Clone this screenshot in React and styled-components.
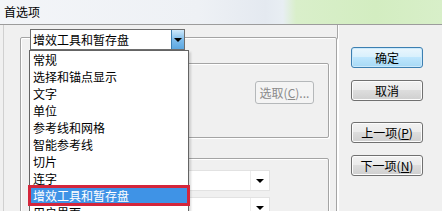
import React from 'react';
import styled, { createGlobalStyle } from 'styled-components';

const Global = createGlobalStyle`
  html, body { margin: 0; padding: 0; }
  body {
    font-family: "Noto Sans CJK SC", "Microsoft YaHei", sans-serif;
    font-size: 12px;
    color: #000;
    background: #f0f0f0;
  }
`;

const Window = styled.div`
  width: 442px;
  height: 211px;
  overflow: hidden;
  position: relative;
  display: flex;
  flex-direction: column;
  background: #f0f0f0;
`;

const TitleBar = styled.div`
  height: 24px;
  flex: none;
  display: flex;
  align-items: center;
  padding-left: 4px;
  box-sizing: border-box;
  background: linear-gradient(90deg, #f3f5f8 0%, #eef1f5 45%, #e4e9f0 60%, #e8eef3 64%, #d9efca 67%, #d3edc1 85%, #d8efc9 100%);
  font-size: 12px;
  line-height: 1;
`;

const Body = styled.div`
  flex: 1;
  display: flex;
  border-top: 1px solid #9c9c9c;
  background: #f0f0f0;
`;

const LeftFrame = styled.div`
  width: 333px;
  margin-left: 3px;
  border-left: 1px solid #d0d0d0;
  border-right: 1px solid #a8a8a8;
  box-shadow: 1px 0 0 #ffffff;
  position: relative;
`;

const GroupBox = styled.div`
  margin: ${p => p.$m};
  height: ${p => p.$h};
  border: 1px solid #a4a4a4;
  border-radius: 2px;
  box-shadow: inset 1px 1px 0 #ffffff, 1px 1px 0 #ffffff;
  box-sizing: border-box;
  display: flex;
  flex-direction: column;
`;

const Combo = styled.div`
  width: 155px;
  height: 21px;
  margin: -9px 0 0 9px;
  box-sizing: border-box;
  border: 1px solid #6e6e6e;
  background: #fff;
  display: flex;
  align-items: center;
`;

const ComboText = styled.span`
  flex: 1;
  padding-left: 2px;
`;

const ComboArrow = styled.div`
  width: 13px;
  height: 19px;
  box-sizing: border-box;
  border-left: 1px solid #3c7fb1;
  background: linear-gradient(#cfe9fb, #7fbdec 50%, #5ca8e2);
  display: flex;
  align-items: center;
  justify-content: center;
`;

const Triangle = styled.div`
  width: 0;
  height: 0;
  border-left: 4px solid transparent;
  border-right: 4px solid transparent;
  border-top: 4px solid #000;
  margin-top: 1px;
`;

const GroupRow = styled.div`
  display: flex;
  justify-content: flex-end;
  padding: 17px 14px 0 0;
`;

const SelectStack = styled.div`
  display: flex;
  flex-direction: column;
  align-items: flex-end;
  gap: 6px;
  padding: 11px 58px 0 0;
`;

const Select = styled.div`
  width: 110px;
  height: 21px;
  box-sizing: border-box;
  border: 1px solid #e2e2e2;
  background: #fff;
  display: flex;
  justify-content: flex-end;
  align-items: center;
`;

const SelectArrow = styled.div`
  width: 18px;
  height: 100%;
  border-left: 1px solid #ececec;
  display: flex;
  align-items: center;
  justify-content: center;
`;

const Button = styled.button`
  width: ${p => p.$w || 72}px;
  height: ${p => p.$h || 21}px;
  box-sizing: border-box;
  padding: 0;
  font-family: inherit;
  font-size: 12px;
  line-height: 1;
  border-radius: 3px;
  border: 1px solid ${p => (p.$primary ? '#3c7fb1' : p.disabled ? '#b5b8ba' : '#707070')};
  color: ${p => (p.disabled ? '#8a8a8a' : '#000')};
  background: ${p =>
    p.$primary
      ? 'linear-gradient(#eaf6fd 0%, #d9f0fc 45%, #bee6fd 50%, #a7d9f5 100%)'
      : p.disabled
      ? '#f4f4f4'
      : 'linear-gradient(#f2f2f2 0%, #ebebeb 45%, #dddddd 50%, #cfcfcf 100%)'};
  box-shadow: inset 0 0 0 1px ${p => (p.$primary ? '#cbe9fb' : p.disabled ? '#f4f4f4' : '#fcfcfc')};
`;

const RightCol = styled.div`
  display: flex;
  flex-direction: column;
  padding: 22px 0 0 13px;
`;

const Spacer = styled.div`
  height: ${p => p.$h}px;
`;

const List = styled.div`
  position: absolute;
  left: 25px;
  top: 25px;
  width: 160px;
  height: 200px;
  box-sizing: border-box;
  border: 1px solid #646464;
  background: #fff;
  box-shadow: 2px 2px 2px rgba(0, 0, 0, 0.15);
`;

const Item = styled.div`
  height: 17px;
  line-height: 17px;
  padding-left: 3px;
  white-space: nowrap;
  ${p =>
    p.$selected &&
    `
    background: #3f93e6;
    color: #fff;
    box-shadow: 0 0 0 2px #d4263b, inset 0 0 0 1px #d4263b;
    position: relative;
  `}
`;

const items = [
  '常规',
  '选择和锚点显示',
  '文字',
  '单位',
  '参考线和网格',
  '智能参考线',
  '切片',
  '连字',
  '增效工具和暂存盘',
  '用户界面',
];

export default function App() {
  return (
    <Window>
      <Global />
      <TitleBar>首选项</TitleBar>
      <Body>
        <LeftFrame>
          <GroupBox $m="12px 0 0 16px" $h="200px">
            <Combo>
              <ComboText>增效工具和暂存盘</ComboText>
              <ComboArrow><Triangle /></ComboArrow>
            </Combo>
            <GroupBox $m="13px 7px 0 8px" $h="76px">
              <GroupRow>
                <Button $w={59} $h={23} disabled>选取(<u>C</u>)...</Button>
              </GroupRow>
            </GroupBox>
            <GroupBox $m="20px 7px 0 8px" $h="80px">
              <SelectStack>
                <Select><SelectArrow><Triangle /></SelectArrow></Select>
                <Select><SelectArrow><Triangle /></SelectArrow></Select>
              </SelectStack>
            </GroupBox>
          </GroupBox>
          <List>
            {items.map(t => (
              <Item key={t} $selected={t === '增效工具和暂存盘'}>{t}</Item>
            ))}
          </List>
        </LeftFrame>
        <RightCol>
          <Button $primary>确定</Button>
          <Spacer $h={12} />
          <Button>取消</Button>
          <Spacer $h={21} />
          <Button>上一项(<u>P</u>)</Button>
          <Spacer $h={12} />
          <Button>下一项(<u>N</u>)</Button>
        </RightCol>
      </Body>
    </Window>
  );
}
